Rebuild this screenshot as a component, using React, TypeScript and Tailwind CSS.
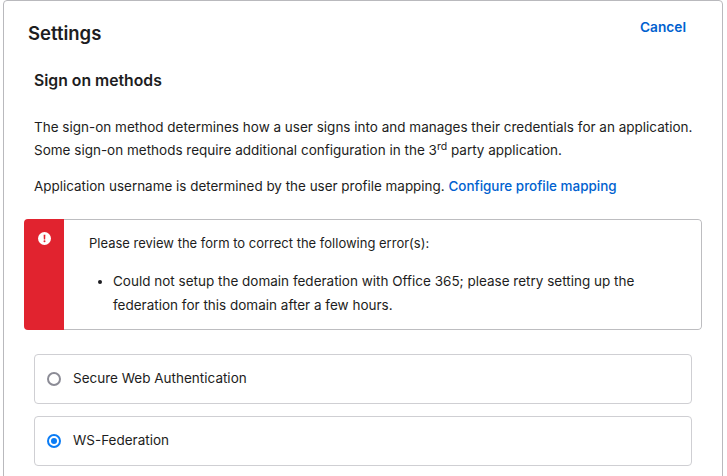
export default function App() {
  return (
    <div className="h-[476px] w-[727px] overflow-hidden bg-white pl-[3px] pr-1 font-['Inter',sans-serif] text-[#1d1d21]">
      <div className="h-[500px] rounded-t border border-[#b9b9bd] bg-white pl-5 pr-5">
        <div className="flex items-start justify-between">
          <h1 className="pt-5 pl-1 text-[18.5px] leading-[24px] font-semibold">Settings</h1>
          <a className="pt-[17px] pr-4 text-[13.7px] leading-[18px] font-semibold text-[#0061cf]">Cancel</a>
        </div>
        <div className="pl-[10px] pr-2.5 whitespace-nowrap">
          <h2 className="mt-[25px] text-[15.75px] leading-[22px] font-semibold">Sign on methods</h2>
          <p className="mt-[24px] text-[13.5px] leading-[23px]">
            The sign-on method determines how a user signs into and manages their credentials for an application.
            <br />
            Some sign-on methods require additional configuration in the 3<sup className="text-[10.5px]">rd</sup> party application.
          </p>
          <p className="mt-[13px] text-[13.45px] leading-[23px]">
            Application username is determined by the user profile mapping.{' '}
            <a className="font-medium text-[#0061cf]">Configure profile mapping</a>
          </p>
        </div>
        <div className="mt-[21px] flex h-[111px] overflow-hidden rounded">
          <div className="flex w-[40px] shrink-0 justify-center bg-[#e1232f] pt-[13px]">
            <svg width="13" height="13" viewBox="0 0 13 13">
              <circle cx="6.5" cy="6.5" r="6.5" fill="#fff" />
              <path d="M5.6 2.8h1.8l-.25 4.6h-1.3z" fill="#e1232f" />
              <circle cx="6.5" cy="9.3" r="1" fill="#e1232f" />
            </svg>
          </div>
          <div className="flex-1 rounded-r border-y border-r border-[#bdbdc0] pl-[25px] pt-[11px] text-[13.5px] leading-[24px]">
            <p className="text-[13px]">Please review the form to correct the following error(s):</p>
            <ul className="mt-[14px] list-disc pl-6">
              <li>
                Could not setup the domain federation with Office 365; please retry setting up the
                <br />
                federation for this domain after a few hours.
              </li>
            </ul>
          </div>
        </div>
        <div className="mt-6 flex flex-col gap-3 px-[10px]">
          <label className="flex h-[50px] items-center gap-3 rounded border border-[#cfcfd3] pl-3 text-[13.5px]">
            <span className="h-[14px] w-[14px] rounded-full border-2 border-[#8c8c96]" />
            <span className="-mt-0.5">Secure Web Authentication</span>
          </label>
          <label className="flex h-[50px] items-center gap-3 rounded border border-[#cfcfd3] pl-3 text-[13.5px]">
            <span className="flex h-[14px] w-[14px] items-center justify-center rounded-full border-2 border-[#0a7cf5]">
              <span className="h-[6px] w-[6px] rounded-full bg-[#0a7cf5]" />
            </span>
            <span className="-mt-0.5">WS-Federation</span>
          </label>
        </div>
      </div>
    </div>
  )
}
